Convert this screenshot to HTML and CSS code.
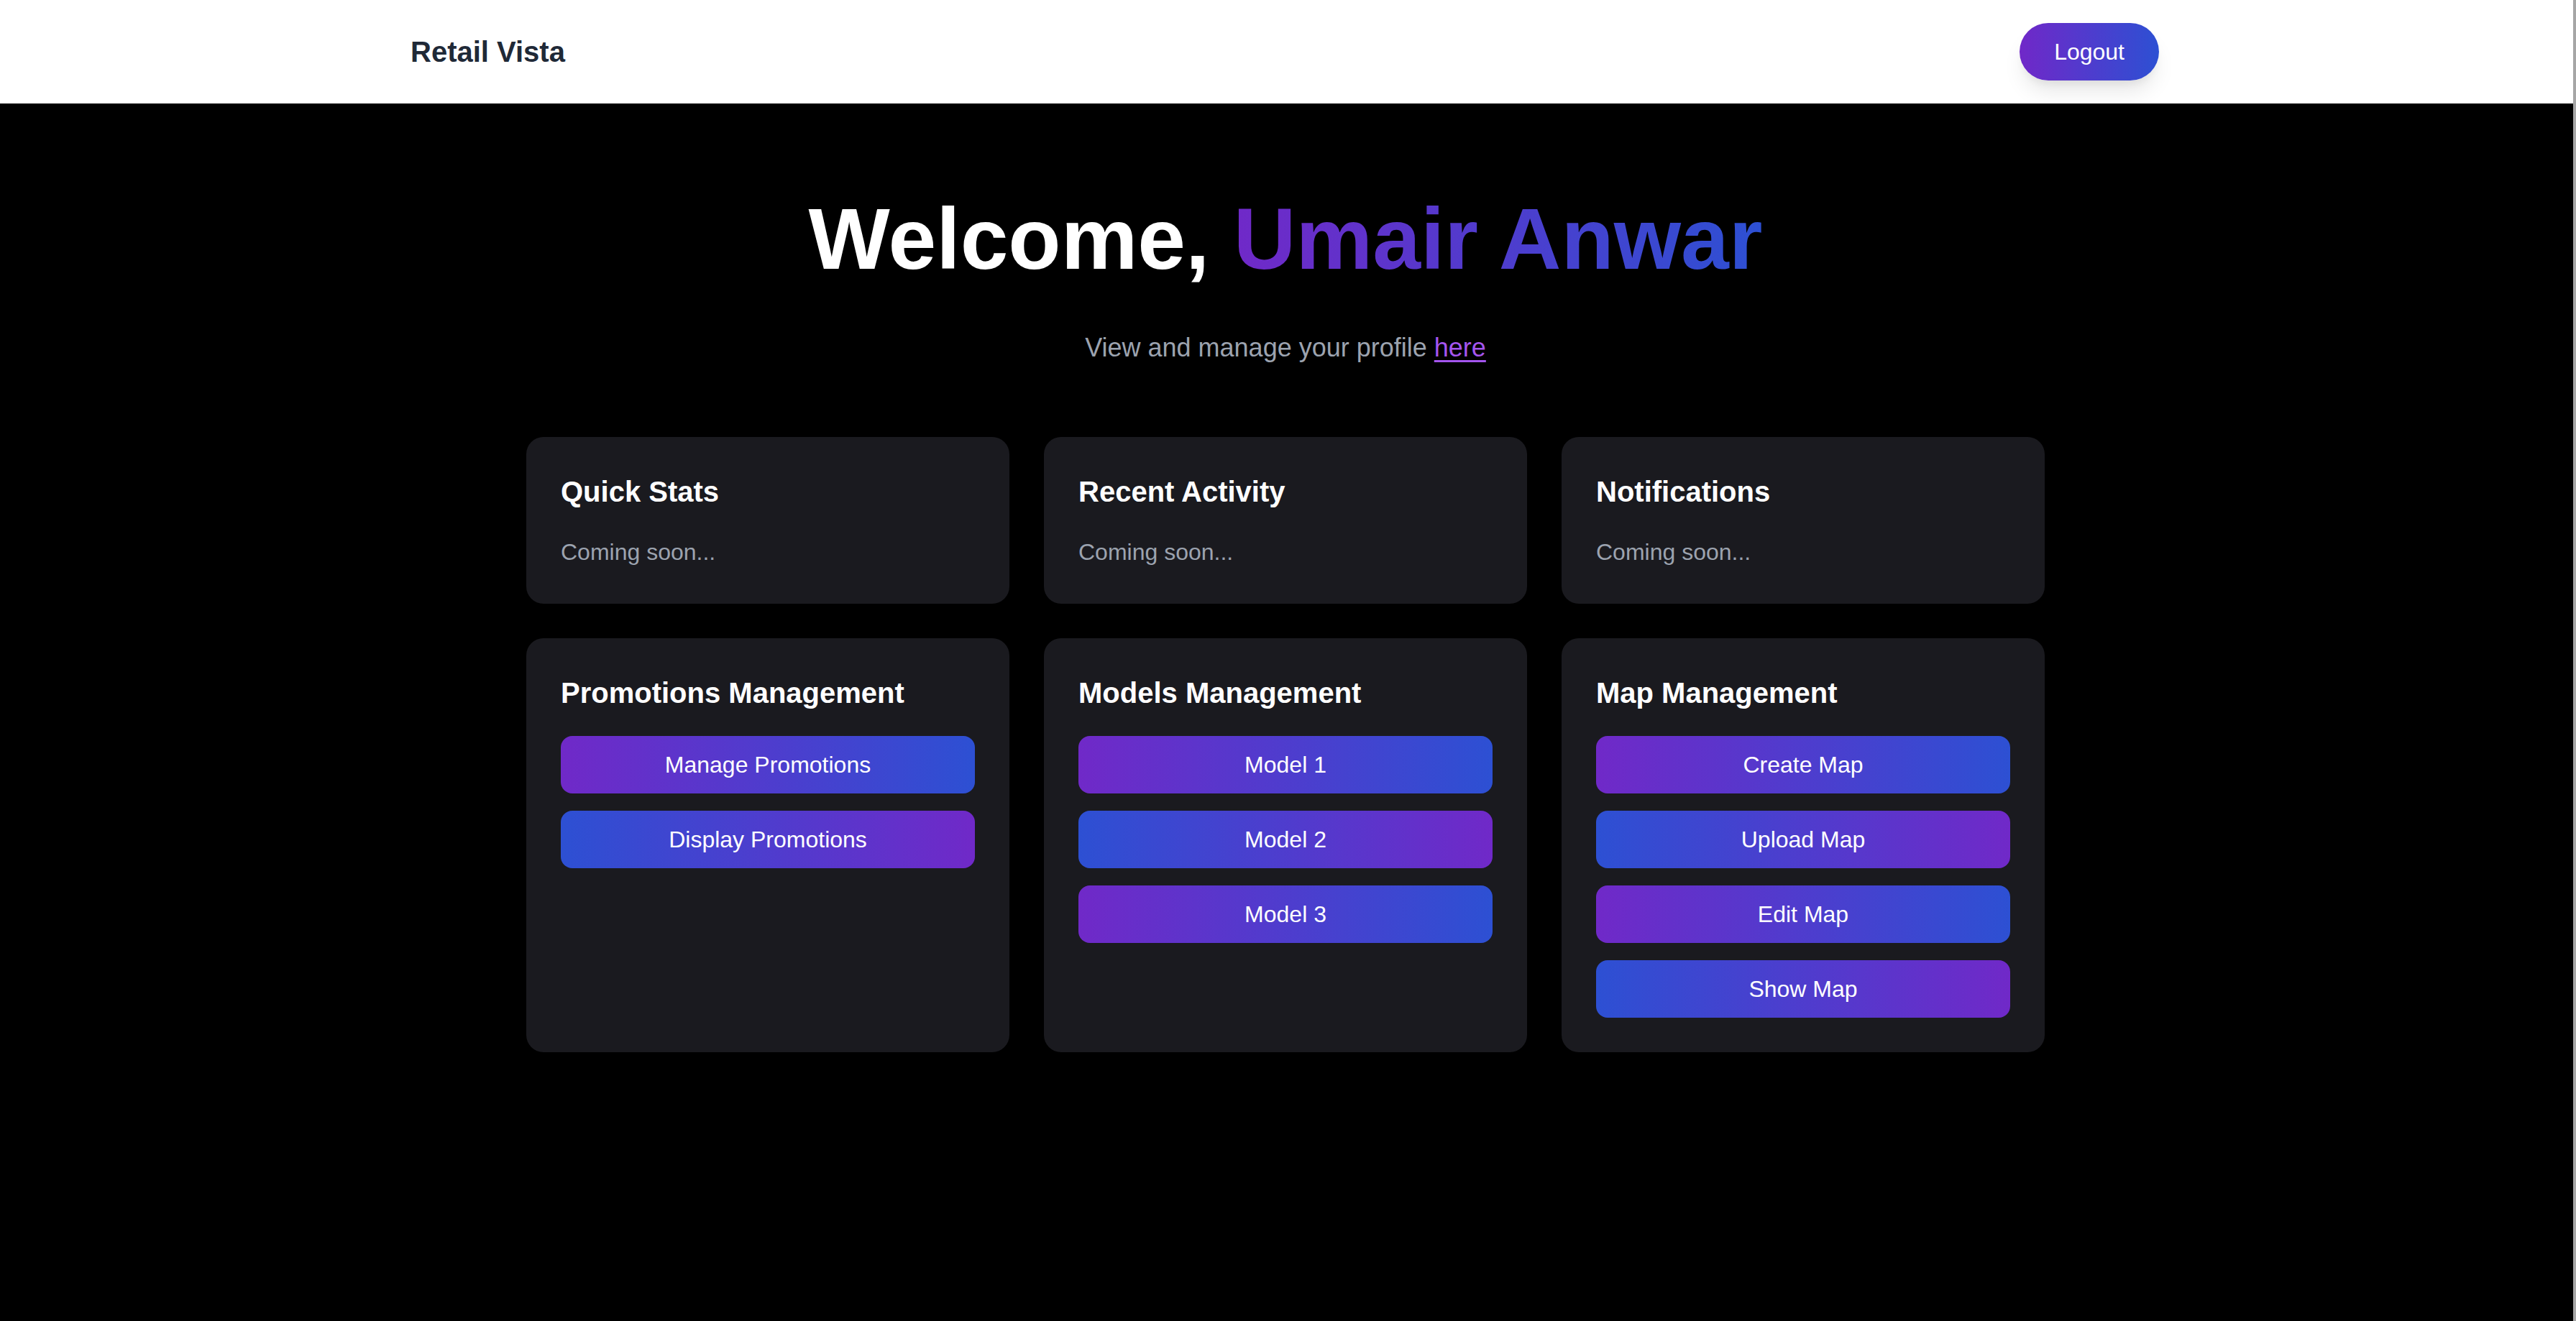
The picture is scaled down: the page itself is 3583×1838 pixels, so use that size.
FILE: index.html
```html
<!DOCTYPE html>
<html lang="en">
<head>
<meta charset="utf-8">
<title>Retail Vista</title>
<link rel="stylesheet" href="styles.css">
</head>
<body>
<header class="topbar">
  <div class="topbar-inner">
    <div class="brand">Retail Vista</div>
    <button class="logout">Logout</button>
  </div>
</header>
<main class="main">
  <h1 class="welcome">Welcome, <span class="name">Umair Anwar</span></h1>
  <p class="sub">View and manage your profile <a href="#" class="link">here</a></p>
  <section class="grid">
    <div class="card">
      <h2 class="card-title">Quick Stats</h2>
      <p class="muted">Coming soon...</p>
    </div>
    <div class="card">
      <h2 class="card-title">Recent Activity</h2>
      <p class="muted">Coming soon...</p>
    </div>
    <div class="card">
      <h2 class="card-title">Notifications</h2>
      <p class="muted">Coming soon...</p>
    </div>
    <div class="card">
      <h2 class="card-title">Promotions Management</h2>
      <div class="btns">
        <button class="btn grad-a">Manage Promotions</button>
        <button class="btn grad-b">Display Promotions</button>
      </div>
    </div>
    <div class="card">
      <h2 class="card-title">Models Management</h2>
      <div class="btns">
        <button class="btn grad-a">Model 1</button>
        <button class="btn grad-b">Model 2</button>
        <button class="btn grad-a">Model 3</button>
      </div>
    </div>
    <div class="card">
      <h2 class="card-title">Map Management</h2>
      <div class="btns">
        <button class="btn grad-a">Create Map</button>
        <button class="btn grad-b">Upload Map</button>
        <button class="btn grad-a">Edit Map</button>
        <button class="btn grad-b">Show Map</button>
      </div>
    </div>
  </section>
</main>
</body>
</html>
```
FILE: styles.css
```css
html, body {
  margin: 0;
  padding: 0;
}
body {
  background: #000;
  font-family: "Liberation Sans", Arial, Helvetica, sans-serif;
  min-height: 100vh;
  border-right: 4px solid #a6a6a6;
  box-sizing: border-box;
}
.topbar {
  background: #fff;
  height: 144px;
  display: flex;
  align-items: center;
  padding-right: 5px;
}
.topbar-inner {
  width: 2432px;
  margin: 0 auto;
  display: flex;
  align-items: center;
  justify-content: space-between;
}
.brand {
  font-size: 40px;
  line-height: 56px;
  font-weight: 700;
  color: #1f2937;
}
.logout {
  border: none;
  height: 80px;
  padding: 0 48px;
  border-radius: 40px;
  background: linear-gradient(90deg, #7028c8, #2d50d3);
  color: #fff;
  font-family: inherit;
  font-size: 32px;
  line-height: 48px;
  box-shadow: 0 20px 30px -6px rgba(0,0,0,0.10), 0 8px 12px -4px rgba(0,0,0,0.06);
}
.main {
  padding-top: 128px;
  padding-right: 3px;
  min-height: calc(100vh - 144px);
  box-sizing: border-box;
  border-right: 2px solid #333;
  margin-right: -2px;
}
.welcome {
  margin: 0 0 64px;
  text-align: center;
  font-size: 120px;
  line-height: 120px;
  font-weight: 700;
  color: #fff;
}
.name {
  background: linear-gradient(90deg, #7029c8, #2d50d3);
  -webkit-background-clip: text;
  background-clip: text;
  color: transparent;
}
.sub {
  margin: 0 0 96px;
  text-align: center;
  font-size: 36px;
  line-height: 56px;
  color: #9ca3af;
}
.link {
  color: #a455ee;
  text-decoration: underline;
  text-decoration-thickness: 3px;
  text-underline-offset: 5px;
}
.grid {
  width: 2112px;
  margin: 0 auto;
  display: grid;
  grid-template-columns: repeat(3, 672px);
  gap: 48px;
}
.card {
  background: #1a1a1f;
  border-radius: 24px;
  padding: 48px;
}
.card-title {
  margin: 0 0 32px;
  font-size: 40px;
  line-height: 56px;
  font-weight: 700;
  color: #fff;
}
.muted {
  margin: 0;
  font-size: 32px;
  line-height: 48px;
  color: #9ca3af;
}
.btns {
  display: flex;
  flex-direction: column;
  gap: 24px;
}
.btn {
  border: none;
  height: 80px;
  border-radius: 16px;
  color: #fff;
  font-family: inherit;
  font-size: 32px;
  line-height: 48px;
  padding: 0;
}
.grad-a {
  background: linear-gradient(90deg, #7029c8, #2d50d3);
}
.grad-b {
  background: linear-gradient(90deg, #2d50d3, #7029c8);
}
```
